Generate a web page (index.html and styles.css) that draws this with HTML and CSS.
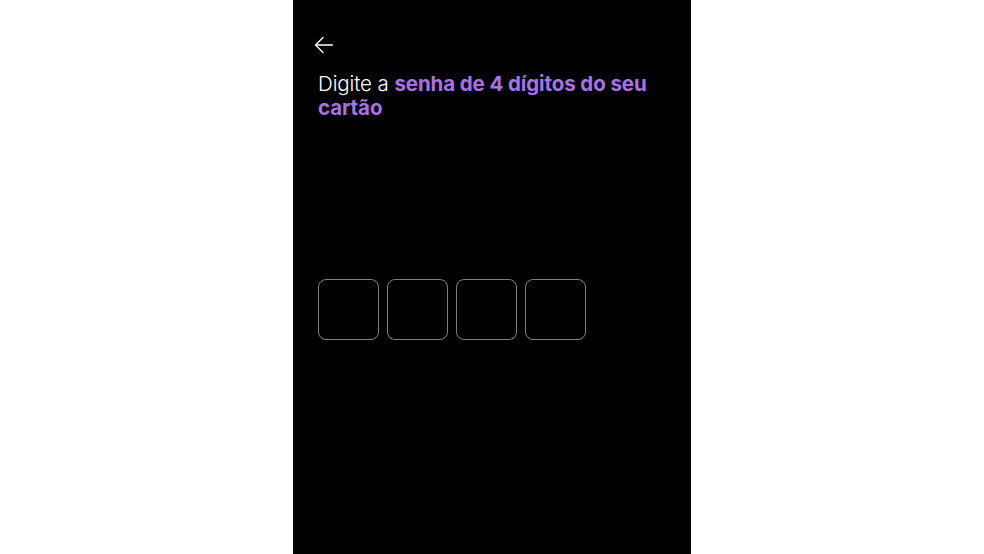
FILE: index.html
```html
<!DOCTYPE html>
<html lang="pt-BR">
<head>
  <meta charset="UTF-8">
  <meta name="viewport" content="width=device-width, initial-scale=1.0">
  <title>Senha do cartão</title>
  <link rel="stylesheet" href="styles.css">
</head>
<body>
  <div class="screen">
    <button class="back" aria-label="Voltar">
      <svg width="20" height="18" viewBox="0 0 20 18" fill="none" stroke="#fff" stroke-width="1.3" stroke-linecap="round" stroke-linejoin="round">
        <path d="M18.5 9H2"/>
        <path d="M9 1.5L1.5 9L9 16.5"/>
      </svg>
    </button>

    <h1 class="title">Digite a <strong>senha de 4 dígitos do seu cartão</strong></h1>

    <!-- PIN boxes -->
    <div class="pin">
      <div class="pin-box"></div>
      <div class="pin-box"></div>
      <div class="pin-box"></div>
      <div class="pin-box"></div>
    </div>
  </div>
</body>
</html>
```

FILE: styles.css
```css
body {
  margin: 0;
  background: #fff;
  font-family: 'Inter', 'Liberation Sans', sans-serif;
}

.screen {
  width: 398px;
  height: 554px;
  margin: 0 auto;
  background: #000;
  box-sizing: border-box;
  padding: 36px 25px 0;
  display: flex;
  flex-direction: column;
}

.back {
  align-self: flex-start;
  background: none;
  border: 0;
  padding: 0;
  margin-left: -4px;
  width: 20px;
  height: 18px;
  display: flex;
}

.title {
  margin: 18px 0 0;
  font-size: 20.5px;
  line-height: 24px;
  font-weight: 300;
  color: #fff;
  letter-spacing: -0.1px;
}

.title strong {
  font-weight: 700;
  color: #a872e6;
}

.pin {
  display: flex;
  gap: 8px;
  margin-top: 159px;
}

.pin-box {
  width: 59px;
  height: 59px;
  border: 1px solid #808080;
  border-radius: 8px;
}
```
